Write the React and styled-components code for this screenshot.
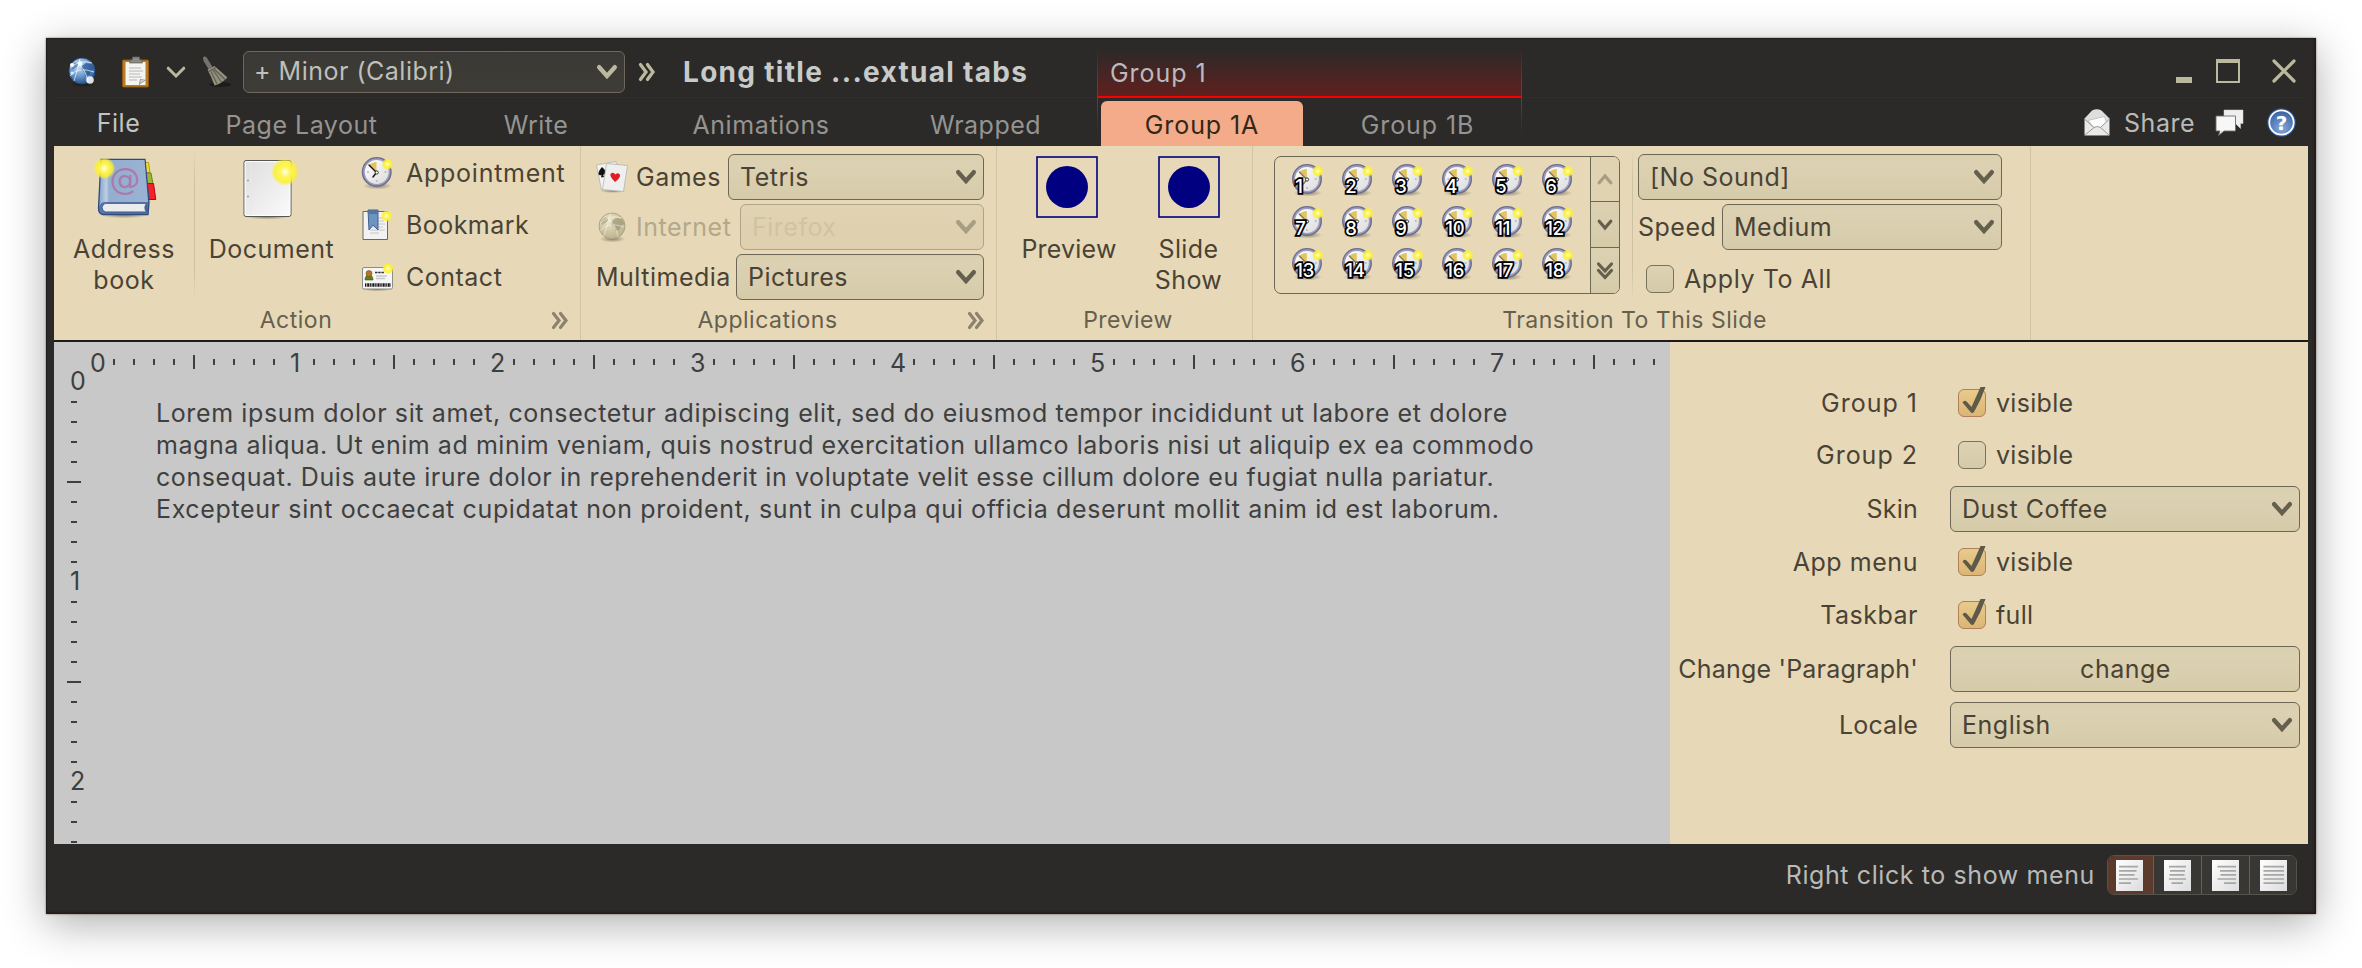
import React from 'react';
import styled, { createGlobalStyle, css } from 'styled-components';

const c = {
  frame: '#2b2a28',
  cream: '#e7d9b7',
  paper: '#c8c8c8',
  ink: '#4a4335',
  muted: '#665f4e',
  line: '#6d6856',
  olive: '#bbb99d',
};

const Global = createGlobalStyle`
  * { box-sizing: border-box; }
  html, body { margin: 0; background: #fff; }
  body { font-family: Inter, "Liberation Sans", sans-serif; font-size: 25px; letter-spacing: 0.5px; line-height: 32px; color: ${c.ink}; white-space: nowrap; overflow: hidden; }
  svg { display: block; flex: none; overflow: visible; }
`;

const Desktop = styled.div`
  width: 2362px;
  height: 968px;
  padding: 38px 46px 54px;
  overflow: hidden;
`;

const Window = styled.main`
  display: flex;
  flex-direction: column;
  width: 2270px;
  height: 876px;
  padding: 0 8px;
  background: ${c.frame};
  box-shadow: inset 0 0 0 1px #211d1a, inset 0 -2px 2px #2a1c16, inset -2px 0 2px #2a1c16, 0 0 2px rgba(0, 0, 0, 0.5), 0 10px 40px rgba(0, 0, 0, 0.32);
`;

const TitleBar = styled.header`
  display: flex;
  height: 60px;
  border-bottom: 1px solid #302e2c;
`;

const QuickAccess = styled.div`
  display: flex;
  align-items: center;
  width: 1043px;
  padding: 9px 0 0 12px;
`;

const Gap = styled.span`
  flex: none;
  width: ${(p) => p.$w}px;
`;

const Title = styled.h1`
  margin: 0;
  padding-bottom: 1px;
  font-size: 28px;
  font-weight: 700;
  letter-spacing: 1.3px;
  color: #c8caca;
`;

const contextEdge = css`
  content: '';
  position: absolute;
  top: 0;
  width: 1px;
  height: 86px;
  background: linear-gradient(transparent, #4a4744 40%, #4a4744 60%, transparent);
`;

const ContextGroup = styled.div`
  position: relative;
  align-self: flex-end;
  width: 425px;
  height: 49px;
  margin-bottom: -1px;
  padding: 8px 13px 0;
  letter-spacing: 0.95px;
  color: #bcbaba;
  background: linear-gradient(${c.frame}, #60201f);
  border-bottom: 2px solid #f80000;
  &::before { ${contextEdge} left: 0; }
  &::after { ${contextEdge} right: 0; }
`;

const WindowButtons = styled.div`
  display: flex;
  align-items: center;
  margin-left: auto;
  padding: 6px 12px 0 0;
`;

const TabBar = styled.nav`
  display: flex;
  height: 48px;
`;

const Tab = styled.span`
  width: ${(p) => p.$w}px;
  padding-top: ${(p) => (p.$lead ? 9 : 11)}px;
  text-align: center;
  letter-spacing: ${(p) => p.$ls ?? 0.5}px;
  color: ${(p) => (p.$active ? '#332718' : p.$lead ? '#c3c4c2' : '#949492')};
  ${(p) => p.$active && css`
    margin-top: 3px;
    padding-top: 8px;
    background: #f3ab89;
    border-radius: 6px 6px 0 0;
  `}
`;

const TabActions = styled.div`
  display: flex;
  align-items: center;
  margin-left: auto;
  padding: 1px 12px 0 0;
  color: #b9bab8;
`;

const Ribbon = styled.section`
  display: flex;
  height: 196px;
  background: ${c.cream};
  border-bottom: 2px solid #1d1a18;
`;

const Group = styled.section`
  display: flex;
  flex-direction: column;
  width: ${(p) => p.$w}px;
  border-right: 1px solid #cfc5a3;
`;

const GroupBody = styled.div`
  display: flex;
  height: 154px;
  padding-left: ${(p) => p.$pl || 0}px;
`;

const GroupLabel = styled.footer`
  display: flex;
  align-items: center;
  height: 40px;
  padding: 0 ${(p) => p.$pr || 0}px 0 ${(p) => p.$pl || 0}px;
  font-size: 23px;
  color: ${c.muted};
`;

const LabelText = styled.span`
  flex: 1;
  text-align: center;
`;

const Launcher = styled.span`
  width: 42px;
  padding-left: 14px;
`;

const BigButton = styled.div`
  display: flex;
  flex-direction: column;
  align-items: center;
  gap: 14px;
  width: ${(p) => p.$w}px;
  padding-top: 10px;
  text-align: center;
  white-space: pre-line;
  line-height: 31px;
  letter-spacing: ${(p) => p.$ls ?? 0.6}px;
`;

const IconSlot = styled.span`
  display: flex;
  justify-content: center;
  height: 64px;
  margin-left: ${(p) => p.$shift || 0}px;
`;

const Divider = styled.i`
  flex: none;
  width: 1px;
  height: 150px;
  margin-top: 4px;
  background: linear-gradient(transparent, #cdc3a0 20%, #cdc3a0 80%, transparent);
`;

const SmallList = styled.div`
  padding: 1px 0 0 13px;
`;

const SmallItem = styled.div`
  display: flex;
  align-items: center;
  gap: 13px;
  height: 52px;
  letter-spacing: ${(p) => p.$ls ?? 0.5}px;
`;

const FieldColumn = styled.div`
  display: flex;
  flex-direction: column;
  gap: 4px;
  width: ${(p) => p.$w}px;
  padding-top: 8px;
`;

const FieldRow = styled.div`
  display: flex;
  align-items: center;
  height: 46px;
  padding-top: ${(p) => p.$drop || 0}px;
  color: ${(p) => (p.$disabled ? '#b3a88c' : c.ink)};
`;

const ComboBox = styled.div`
  display: flex;
  align-items: center;
  justify-content: ${(p) => (p.$center ? 'center' : 'space-between')};
  width: ${(p) => p.$w}px;
  height: ${(p) => (p.$dark ? 42 : 46)}px;
  margin-left: auto;
  padding: 0 7px 0 ${(p) => (p.$center ? 8 : p.$dark ? 10 : 11)}px;
  border: 1px solid ${(p) => (p.$dark ? '#6f675b' : p.$disabled ? '#aea489' : c.line)};
  border-radius: 6px;
  background: ${(p) => (p.$dark ? 'linear-gradient(#3a3935, #3e3c36)' : p.$disabled ? 'linear-gradient(#e1d4b3, #decfae)' : 'linear-gradient(#d9ceac, #dcd1b2 15%, #d6cba9)')};
  color: ${(p) => (p.$dark ? '#bfbfbb' : p.$disabled ? '#cfc4a2' : c.ink)};
`;

const ComboText = styled.span`
  padding-bottom: ${(p) => (p.$dark ? 2 : 0)}px;
`;

const Box = styled.span`
  flex: none;
  width: 28px;
  height: 28px;
  border: 1px solid ${(p) => (p.$on ? '#b0805a' : '#77715e')};
  border-radius: 6px;
  background: ${(p) => (p.$on ? 'linear-gradient(#e8cb8c, #dcb574)' : 'linear-gradient(#ddd2b3, #d5caa8)')};
`;

const CheckRow = styled.div`
  display: flex;
  align-items: center;
  gap: 10px;
  height: 36px;
  padding: 0 0 0 8px;
  letter-spacing: ${(p) => p.$ls ?? 0.5}px;
`;

const Gallery = styled.div`
  display: flex;
  width: 346px;
  height: 138px;
  margin: 10px 12px 0 0;
  border: 1px solid ${c.line};
  border-radius: 7px;
  overflow: hidden;
`;

const GalleryGrid = styled.div`
  display: grid;
  grid-template-columns: repeat(6, 50px);
  grid-auto-rows: 42px;
  align-content: start;
  width: 315px;
  padding: 1px 0 0 7px;
`;

const GalleryCell = styled.div`
  display: grid;
  place-items: center;
`;

const GalleryScroll = styled.div`
  display: grid;
  grid-template-rows: 45px 46px 1fr;
  width: 29px;
  border-left: 1px solid ${c.line};
  background: #d9ceac;
`;

const ScrollButton = styled.span`
  display: grid;
  place-items: center;
  border-bottom: ${(p) => (p.$last ? '0' : `1px solid ${c.line}`)};
  background: ${(p) => (p.$disabled ? '#dfd3b1' : 'linear-gradient(#dcd1b2, #d6cba9)')};
`;

const Workspace = styled.div`
  display: flex;
  height: 502px;
`;

const Editor = styled.article`
  width: 1616px;
  background: ${c.paper};
  color: #3f3f3f;
  overflow: hidden;
`;

const HRuler = styled.div`
  display: flex;
  height: 30px;
  padding: 10px 0 0 30px;
`;

const HMark = styled.span`
  display: flex;
  align-items: center;
  flex: none;
  width: 20px;
  height: 20px;
  padding: ${(p) => (p.$n ? '2px 0 0 6px' : '0 0 0 9px')};
  line-height: 20px;
  &::before {
    content: '';
    width: ${(p) => (p.$n ? 0 : 2)}px;
    height: ${(p) => (p.$mid ? 14 : 6)}px;
    background: #3f3f3f;
  }
`;

const EditorBody = styled.div`
  display: flex;
`;

const VRuler = styled.div`
  width: 102px;
  height: 472px;
  padding-left: 13px;
`;

const VMark = styled.span`
  display: flex;
  align-items: center;
  height: 20px;
  padding: 0 0 ${(p) => (p.$n ? 2 : 0)}px ${(p) => (p.$mid ? 0 : p.$n ? 3 : 4)}px;
  line-height: 18px;
  &::before {
    content: '';
    width: ${(p) => (p.$n ? 0 : p.$mid ? 14 : 6)}px;
    height: 2px;
    background: #3f3f3f;
  }
`;

const Prose = styled.div`
  padding-top: 25px;
`;

const ProseLine = styled.div`
  letter-spacing: ${(p) => p.$ls}px;
`;

const SidePanel = styled.aside`
  width: 638px;
  padding: 34px 8px 0 0;
  background: ${c.cream};
`;

const SettingRow = styled.div`
  display: grid;
  grid-template-columns: 248px 350px;
  column-gap: 32px;
  align-items: center;
  height: ${(p) => p.$h}px;
`;

const SettingLabel = styled.span`
  text-align: right;
  letter-spacing: ${(p) => p.$ls}px;
`;

const StatusBar = styled.footer`
  display: flex;
  align-items: center;
  justify-content: flex-end;
  height: 62px;
  padding-right: 11px;
  letter-spacing: 0.6px;
  color: #b8bab9;
`;

const AlignButtons = styled.div`
  display: flex;
  width: 190px;
  height: 40px;
  margin-left: 12px;
  border: 1px solid #55514b;
  border-radius: 7px;
  overflow: hidden;
`;

const AlignButton = styled.span`
  display: grid;
  place-items: center;
  width: ${(p) => (p.$on || p.$last ? 46 : 48)}px;
  padding-right: ${(p) => (p.$on ? 2 : 0)}px;
  background: ${(p) => (p.$on ? '#5c3a2c' : '#383733')};
  border-right: ${(p) => (p.$last ? '0' : '1px solid #64605a')};
`;

const Defs = () => (
  <svg width="0" height="0" aria-hidden="true" style={{ position: 'absolute' }}>
    <defs>
      <radialGradient id="star">
        <stop offset="0" stopColor="#fffff0" />
        <stop offset="0.35" stopColor="#fff65a" />
        <stop offset="0.75" stopColor="#fdf12e" stopOpacity="0.85" />
        <stop offset="1" stopColor="#fdf12e" stopOpacity="0" />
      </radialGradient>
      <radialGradient id="shade">
        <stop offset="0" stopColor="#000" stopOpacity="0.4" />
        <stop offset="1" stopColor="#000" stopOpacity="0" />
      </radialGradient>
      <linearGradient id="sheet" x1="0" y1="0" x2="1" y2="1">
        <stop offset="0" stopColor="#fff" />
        <stop offset="1" stopColor="#dcdcdc" />
      </linearGradient>
      <linearGradient id="page" x1="0" y1="0" x2="1" y2="1">
        <stop offset="0" stopColor="#dedede" />
        <stop offset="1" stopColor="#fafafa" />
      </linearGradient>
      <radialGradient id="sea" cx="0.4" cy="0.3" r="0.75">
        <stop offset="0" stopColor="#cfe2f5" />
        <stop offset="0.5" stopColor="#6f9fd2" />
        <stop offset="1" stopColor="#1c4a86" />
      </radialGradient>
      <radialGradient id="sand" cx="0.4" cy="0.3" r="0.75">
        <stop offset="0" stopColor="#ece5c8" />
        <stop offset="1" stopColor="#b8ae88" />
      </radialGradient>
      <radialGradient id="help" cx="0.5" cy="0.75" r="0.8">
        <stop offset="0" stopColor="#86a9d8" />
        <stop offset="1" stopColor="#2f5a9c" />
      </radialGradient>
      <linearGradient id="cover" x1="0" y1="0" x2="1" y2="0">
        <stop offset="0" stopColor="#8aa6cc" />
        <stop offset="0.14" stopColor="#bccfe4" />
        <stop offset="0.2" stopColor="#93aed0" />
        <stop offset="1" stopColor="#9ab3d4" />
      </linearGradient>
    </defs>
  </svg>
);

const Chevron = ({ color = '#655f4e', w = 20, h = 14, sw = 4.4, up }) => (
  <svg width={w} height={h} viewBox={`0 0 ${w} ${h}`} transform={up ? 'rotate(180)' : undefined}>
    <path d={`M2.2 2.2L${w / 2} ${h - 3}L${w - 2.2} 2.2`} fill="none" stroke={color} strokeWidth={sw} strokeLinecap="round" />
  </svg>
);

const DoubleRight = ({ color = '#8b836d', h = 17 }) => (
  <svg width="16" height={h} viewBox="0 0 16 17" preserveAspectRatio="none">
    <path d="M1.5 1.5L7 8.5L1.5 15.5M8.5 1.5L14 8.5L8.5 15.5" fill="none" stroke={color} strokeWidth="3.2" strokeLinecap="round" />
  </svg>
);

const DoubleDown = () => (
  <svg width="16" height="17" viewBox="0 0 16 17">
    <path d="M1.5 2L8 9L14.5 2M1.5 8.5L8 15.5L14.5 8.5" fill="none" stroke="#655f4e" strokeWidth="3.2" strokeLinecap="round" />
  </svg>
);

const Star = ({ x, y, r }) => <circle cx={x} cy={y} r={r} fill="url(#star)" />;

const Globe = ({ muted }) => (
  <svg width="32" height="32" viewBox="0 0 32 32">
    <ellipse cx="16.5" cy="28" rx="13" ry="3.5" fill="url(#shade)" />
    <circle cx="16" cy="15" r="13" fill={muted ? 'url(#sand)' : 'url(#sea)'} stroke={muted ? '#a39b78' : '#234b80'} strokeWidth="0.8" />
    <path d="M16 10l4-3 6 1 2.500 5-3 1-2 5-4 1-1-4-3-2z" fill={muted ? '#9b9474' : '#1f4f90'} opacity="0.7" />
    <path d="M5 10l5-4 3 1-2 4-5 3z" fill={muted ? '#a59d7c' : '#3c70b2'} opacity="0.6" />
    <path d="M4 12Q14 3 26 7M4 20Q12 10 28 16M8 25Q12 12 14 2.500M22 26Q20 12 9 5" fill="none" stroke="#fff" strokeWidth="0.9" opacity={muted ? 0.5 : 0.75} />
    {!muted && <g fill="#fff"><circle cx="6" cy="9" r="2" /><circle cx="14" cy="7.5" r="2.2" opacity="0.9" /><circle cx="6" cy="17" r="1.6" opacity="0.8" /><circle cx="24" cy="24" r="3.8" opacity="0.85" /></g>}
  </svg>
);

const Clipboard = () => (
  <svg width="32" height="32" viewBox="0 0 32 32">
    <rect x="2.5" y="4" width="26" height="27" rx="1" fill="#b97c1e" stroke="#8a5810" />
    <path d="M5.5 6h20v23h-20z" fill="#f4f4f3" />
    <path d="M9 12h12M9 15h14M9 18h11M9 21h13M9 24h8" stroke="#b5b5b3" strokeWidth="1.2" />
    <path d="M19 29l1-6 6 1z" fill="#7d7d7b" /><path d="M20 28l0.5-4.5 4.5 0.5z" fill="#cfcfcd" />
    <path d="M9.5 7q0-3.5 3-3.5v-2.5h7v2.5q3 0 3 3.5z" fill="#8b8b85" stroke="#5d5d58" strokeWidth="0.7" />
  </svg>
);

const Broom = () => (
  <svg width="32" height="32" viewBox="0 0 32 32">
    <ellipse cx="21" cy="28.5" rx="11" ry="2.5" fill="#1c1b1a" />
    <path d="M4 1.5Q6-0.500 8 2L13.5 11L9.5 13L4.5 5Z" fill="#76736a" />
    <path d="M8.5 13.5L15.5 10L28.5 21.5Q22 28 15.5 29.5Q12 20 8.5 13.5Z" fill="#93907f" />
    <path d="M9 16L17 11.5M12 15.5L18 28M14 14L22.5 26M15.5 13.5L26 23.5" stroke="#5e5b50" strokeWidth="1.1" fill="none" />
  </svg>
);

const Envelope = () => (
  <svg width="26" height="27" viewBox="0 0 26 27">
    <path d="M0.5 9.5L8 1.5Q13-1 17.5 1.5L25.5 9.5V26.5H0.5Z" fill="#dedede" />
    <path d="M4 11.5L20.5 7.5L22.5 14L16 19H10Z" fill="#fdfdfd" stroke="#b5b5b5" strokeWidth="0.7" />
    <path d="M1 10.5L10 18.5Q13 16.5 16.5 18.5L25 10.5V26H1Z" fill="#e9e9e9" />
    <path d="M1 10.5L10 18.5Q13 16.5 16.5 18.5L25 10.5M1 26L10 18.5M25 26L16.5 18.5" fill="none" stroke="#999" strokeWidth="1" />
  </svg>
);

const Bubbles = () => (
  <svg width="28" height="28" viewBox="0 0 28 28">
    <path d="M8 1H27V14.5H24.5V19.5L20 15H8Z" fill="#efefef" stroke="#d0d0d0" strokeWidth="0.5" />
    <path d="M0 7H19.5V22H8L2.5 26.5L4 22H0Z" fill="#f7f7f7" stroke="#6d6d6b" strokeWidth="0.9" />
  </svg>
);

const Help = () => (
  <svg width="29" height="29" viewBox="0 0 29 29">
    <circle cx="14.5" cy="14.5" r="14.3" fill="#2a5596" />
    <circle cx="14.5" cy="14.5" r="12.2" fill="url(#help)" stroke="#fff" strokeWidth="1.8" />
    <text x="14.5" y="22" textAnchor="middle" fontFamily="DejaVu Sans" fontWeight="700" fontSize="20" letterSpacing="0" fill="#fff">?</text>
  </svg>
);

const AddressBook = () => (
  <svg width="64" height="64" viewBox="0 0 64 64">
    <ellipse cx="32" cy="59" rx="24" ry="3.5" fill="url(#shade)" />
    <path d="M52 6.5h4.5l1.5 10h-5z" fill="#f6dc2c" stroke="#b89a10" />
    <path d="M53 17h6l2 11h-7z" fill="#9db637" stroke="#6b8418" />
    <path d="M54 27.5h7.5l2.3 16h-8z" fill="#f0222c" stroke="#c30012" />
    <path d="M9 3.5H53L57 46.5L56 58.5H11Q6.5 58 6.5 52Z" fill="#5b78ad" stroke="#2f4a80" strokeWidth="1.3" />
    <path d="M9.5 4H52.5L56 46H13Q9 46 7.5 50Z" fill="url(#cover)" />
    <path d="M13.5 47.3H55Q51 51 54.5 56H13.5Q10 55 10 51.5Q10.5 48 13.5 47.3Z" fill="#ececec" stroke="#3c5486" strokeWidth="1" />
    <path d="M55 47.5Q51 51 54.5 56l1.5 0.5z" fill="#4a6296" />
    <text x="33" y="33.5" textAnchor="middle" fontFamily="DejaVu Sans" fontSize="31" letterSpacing="0" fill="#b2699f" opacity="0.75">@</text>
    <Star x="12.3" y="12.3" r="11" />
  </svg>
);

const DocumentIcon = () => (
  <svg width="64" height="64" viewBox="0 0 64 64">
    <ellipse cx="28" cy="61" rx="22" ry="2.5" fill="url(#shade)" />
    <rect x="5" y="4.5" width="47" height="56" rx="2" fill="url(#page)" stroke="#555955" />
    <rect x="6.2" y="5.7" width="44.6" height="53.6" rx="1" fill="none" stroke="#fff" />
    <circle cx="9" cy="24.5" r="0.9" fill="#999" /><circle cx="9" cy="40.5" r="0.9" fill="#999" />
    <path d="M12 6v53" stroke="#e8e8e8" />
    <Star x="46" y="16" r="14" />
  </svg>
);

const Clock = ({ label }) => (
  <svg width={label ? 30 : 32} height={label ? 30 : 32} viewBox={label ? '0.7 0 30 30' : '0 0 32 32'}>
    <ellipse cx="16.5" cy="29" rx="14.5" ry="3.5" fill="url(#shade)" />
    <circle cx="15.7" cy="15" r="15" fill="#6d6c90" />
    <circle cx="15.7" cy="14.8" r="13.6" fill="#9a9cba" />
    <circle cx="15.7" cy="15" r="11.9" fill="url(#sheet)" />
    <path d="M15.5 15.5L7.5 8.5Q10.5 5 15.5 5Z" fill="#e2c463" />
    <path d="M15.5 15.5L8 8M15.5 15.5L12 20" stroke={label ? '#8a7c48' : '#111'} strokeWidth="1.4" strokeLinecap="round" />
    <circle cx="15.7" cy="15.5" r="1.6" fill="#fff" stroke="#222" strokeWidth="0.9" />
    <g fill="#bbb"><circle cx="7" cy="15" r="1.1" /><circle cx="24.5" cy="15" r="1.1" /><circle cx="15.7" cy="24" r="1.1" /></g>
    <Star x="26.5" y="7.2" r="5.8" />
    {label && <text x="4" y="28.5" fontSize="18.5" fontWeight="500" letterSpacing="-0.2" fill="#fff" stroke="#000" strokeWidth="3.6" paintOrder="stroke" strokeLinejoin="miter">{label}</text>}
  </svg>
);

const BookmarkIcon = () => (
  <svg width="32" height="32" viewBox="0 0 32 32">
    <path d="M2 2.5H26.5V30.5H2Z" fill="#f2f2f2" stroke="#666a66" />
    <path d="M9 9h15M9 12h14M9 15h15M9 18h13M9 21h15M9 24h9" stroke="#c6c6c6" />
    <path d="M7 1H17V21L12 16L8 21Z" fill="#6d93c0" stroke="#3e618f" />
    <path d="M7 1h10v4H7z" fill="#54759f" />
    <Star x="25.5" y="7" r="5.8" />
  </svg>
);

const ContactIcon = () => (
  <svg width="32" height="32" viewBox="0 0 32 32">
    <ellipse cx="16" cy="28.5" rx="15" ry="1.8" fill="url(#shade)" />
    <rect x="1.5" y="6.5" width="30" height="21.5" rx="1.5" fill="#f6f6f6" stroke="#8c8c88" />
    <path d="M4 19q0-5 4-5t4 5z" fill="#5d7f1c" stroke="#3c5a08" strokeWidth="0.6" />
    <circle cx="8" cy="12.5" r="3" fill="#b5762a" stroke="#7d4b10" strokeWidth="0.6" />
    <path d="M14 11.5h9" stroke="#333" strokeWidth="1.6" strokeDasharray="2.5 0.7" />
    <path d="M15 15h11M15 17.5h9" stroke="#c8c8c8" strokeWidth="1.3" />
    <path d="M4 24h26" stroke="#1a1a1a" strokeWidth="3.6" strokeDasharray="1.4 0.8 2.2 0.7" />
    <Star x="27" y="7.5" r="5.8" />
  </svg>
);

const Cards = () => (
  <svg width="32" height="32" viewBox="0 0 32 32">
    <ellipse cx="17" cy="30" rx="13" ry="2" fill="url(#shade)" />
    <path d="M0.5 4L20 0.5L22 23L5.5 29Z" fill="#f3f3f3" stroke="#b2b2ae" strokeWidth="0.8" />
    <path d="M6 6q4 3.500 4 6t-3 1.500l1 2.500-3 0.500 0.500-2.500q-3.500 1-3-2t3.500-6z" fill="#111" />
    <path d="M10.5 2.5L31.5 4.5L27.5 30.5L6.5 28.5Z" fill="#efefef" stroke="#b2b2ae" strokeWidth="0.8" />
    <path d="M19 21Q13.5 15.5 14.5 13Q17 10.5 19.5 13.5Q22.5 11 24 14Q24.5 17 19 21Z" fill="#dc1f26" />
  </svg>
);

const NavyDisc = () => (
  <svg width="62" height="62" viewBox="0 0 62 62">
    <rect x="1" y="1" width="60" height="60" fill="none" stroke="#000080" strokeWidth="1.6" />
    <circle cx="31" cy="31" r="21" fill="#000080" />
  </svg>
);

const alignLines = {
  left: [[3, 22], [3, 20.5], [3, 18.5], [3, 22], [3, 15]],
  center: [[5, 22], [6, 21], [5.5, 20.5], [5, 22], [7.5, 19]],
  right: [[5.5, 24], [8, 24], [8.5, 24], [5.5, 24], [12, 24]],
  justify: [[3.5, 24], [3.5, 24], [3.5, 24], [3.5, 24], [3.5, 24]],
};

const AlignIcon = ({ kind }) => (
  <svg width="27" height="31" viewBox="0 0 27 31">
    <rect width="27" height="31" fill="url(#sheet)" />
    {alignLines[kind].map(([a, b], i) => (
      <path key={i} d={`M${a} ${6.7 + i * 4.1}H${b}`} stroke="#a6a6a4" strokeWidth="1.7" />
    ))}
  </svg>
);

const Minimize = () => <svg width="16" height="24"><rect y="18" width="16" height="6" fill={c.olive} /></svg>;
const Maximize = () => <svg width="24" height="24"><path d="M0 0H24V24H0ZM2 4V22H22V4Z" fillRule="evenodd" fill={c.olive} /></svg>;
const Close = () => (
  <svg width="24" height="24"><path d="M2 2L22 22M22 2L2 22" stroke={c.olive} strokeWidth="3.2" strokeLinecap="round" /></svg>
);

const Checkbox = ({ on }) => (
  <Box $on={on}>
    {on && <svg width="26" height="26" viewBox="0 0 26 26"><path d="M3.5 12.5Q5.5 9.5 8 12L12.5 17L21.5 -3H26.5Q22 10 15 22Q13 24 11.5 22Z" fill="#5f594a" /></svg>}
  </Box>
);

const Combo = ({ children, w, dark, disabled }) => (
  <ComboBox $w={w} $dark={dark} $disabled={disabled}>
    <ComboText $dark={dark}>{children}</ComboText>
    <Chevron color={dark ? c.olive : disabled ? '#a79e84' : undefined} />
  </ComboBox>
);

const prose = [
  { ls: 0.62, text: 'Lorem ipsum dolor sit amet, consectetur adipiscing elit, sed do eiusmod tempor incididunt ut labore et dolore' },
  { ls: 0.55, text: 'magna aliqua. Ut enim ad minim veniam, quis nostrud exercitation ullamco laboris nisi ut aliquip ex ea commodo' },
  { ls: 0.59, text: 'consequat. Duis aute irure dolor in reprehenderit in voluptate velit esse cillum dolore eu fugiat nulla pariatur.' },
  { ls: 0.63, text: 'Excepteur sint occaecat cupidatat non proident, sunt in culpa qui officia deserunt mollit anim id est laborum.' },
];

const marks = (Mark, count) =>
  Array.from({ length: count }, (_, i) => (
    <Mark key={i} $n={i % 10 === 0} $mid={i % 10 === 5}>{i % 10 === 0 ? i / 10 : null}</Mark>
  ));

const settings = [
  { label: 'Group 1', ls: 1, h: 53, check: true, text: 'visible' },
  { label: 'Group 2', ls: 1, h: 52, check: false, text: 'visible' },
  { label: 'Skin', ls: 0.2, h: 56, combo: 'Dust Coffee' },
  { label: 'App menu', ls: 0.55, h: 50, check: true, text: 'visible' },
  { label: 'Taskbar', ls: 0.5, h: 55, check: true, text: 'full' },
  { label: "Change 'Paragraph'", ls: 0.2, h: 54, button: 'change' },
  { label: 'Locale', ls: 0.1, h: 58, combo: 'English' },
];

export default function App() {
  return (
    <Desktop>
      <Global />
      <Defs />
      <Window>
        <TitleBar>
          <QuickAccess>
            <Globe /><Gap $w={22} />
            <Clipboard /><Gap $w={14} />
            <Chevron color={c.olive} h={13} sw={3} /><Gap $w={13} />
            <Broom /><Gap $w={12} />
            <div><Combo w={382} dark>+ Minor (Calibri)</Combo></div><Gap $w={14} />
            <DoubleRight color={c.olive} h={18} /><Gap $w={28} />
            <Title>Long title ...extual tabs</Title>
          </QuickAccess>
          <ContextGroup>Group 1</ContextGroup>
          <WindowButtons>
            <Minimize /><Gap $w={24} /><Maximize /><Gap $w={32} /><Close />
          </WindowButtons>
        </TitleBar>
        <TabBar>
          <Tab $w={129} $lead>File</Tab>
          <Tab $w={237}>Page Layout</Tab>
          <Tab $w={232}>Write</Tab>
          <Tab $w={218} $ls={0.6}>Animations</Tab>
          <Tab $w={231}>Wrapped</Tab>
          <Tab $w={202} $active $ls={0.9}>Group 1A</Tab>
          <Tab $w={229} $ls={0.9}>Group 1B</Tab>
          <TabActions>
            <Envelope /><Gap $w={14} />Share<Gap $w={21} /><Bubbles /><Gap $w={23} /><Help />
          </TabActions>
        </TabBar>
        <Ribbon>
          <Group $w={527}>
            <GroupBody>
              <BigButton $w={140}><IconSlot><AddressBook /></IconSlot>{'Address\nbook'}</BigButton>
              <Divider />
              <BigButton $w={153} $ls={0.5}><IconSlot $shift={-2}><DocumentIcon /></IconSlot>Document</BigButton>
              <SmallList>
                <SmallItem $ls={0.75}><Clock />Appointment</SmallItem>
                <SmallItem $ls={0.45}><BookmarkIcon />Bookmark</SmallItem>
                <SmallItem><ContactIcon />Contact</SmallItem>
              </SmallList>
            </GroupBody>
            <GroupLabel><LabelText>Action</LabelText><Launcher><DoubleRight /></Launcher></GroupLabel>
          </Group>
          <Group $w={416}>
            <GroupBody $pl={15}>
              <FieldColumn $w={388}>
                <FieldRow><Cards /><Gap $w={8} />Games<Combo w={256}>Tetris</Combo></FieldRow>
                <FieldRow $disabled><Globe muted /><Gap $w={8} />Internet<Combo w={244} disabled>Firefox</Combo></FieldRow>
                <FieldRow>Multimedia<Combo w={248}>Pictures</Combo></FieldRow>
              </FieldColumn>
            </GroupBody>
            <GroupLabel><LabelText>Applications</LabelText><Launcher><DoubleRight /></Launcher></GroupLabel>
          </Group>
          <Group $w={256}>
            <GroupBody $pl={12}>
              <BigButton $w={120} $ls={0.2}><IconSlot $shift={-4}><NavyDisc /></IconSlot>Preview</BigButton>
              <BigButton $w={119} $ls={0.4}><IconSlot><NavyDisc /></IconSlot>{'Slide\nShow'}</BigButton>
            </GroupBody>
            <GroupLabel $pl={7}><LabelText>Preview</LabelText></GroupLabel>
          </Group>
          <Group $w={778}>
            <GroupBody $pl={21}>
              <Gallery>
                <GalleryGrid>
                  {Array.from({ length: 18 }, (_, i) => <GalleryCell key={i}><Clock label={String(i + 1)} /></GalleryCell>)}
                </GalleryGrid>
                <GalleryScroll>
                  <ScrollButton $disabled><Chevron up w={16} h={12} sw={3.2} color="#a69d82" /></ScrollButton>
                  <ScrollButton><Chevron w={16} h={12} sw={3.2} /></ScrollButton>
                  <ScrollButton $last><DoubleDown /></ScrollButton>
                </GalleryScroll>
              </Gallery>
              <Divider />
              <Gap $w={5} />
              <FieldColumn $w={364}>
                <FieldRow><Combo w={364}>[No Sound]</Combo></FieldRow>
                <FieldRow>Speed<Combo w={280}>Medium</Combo></FieldRow>
                <FieldRow $drop={3}><CheckRow $ls={0.6}><Checkbox />Apply To All</CheckRow></FieldRow>
              </FieldColumn>
            </GroupBody>
            <GroupLabel $pr={14}><LabelText>Transition To This Slide</LabelText></GroupLabel>
          </Group>
        </Ribbon>
        <Workspace>
          <Editor>
            <HRuler>{marks(HMark, 79)}</HRuler>
            <EditorBody>
              <VRuler>{marks(VMark, 24)}</VRuler>
              <Prose>
                {prose.map((line) => <ProseLine key={line.text} $ls={line.ls}>{line.text}</ProseLine>)}
              </Prose>
            </EditorBody>
          </Editor>
          <SidePanel>
            {settings.map((s) => (
              <SettingRow key={s.label} $h={s.h}>
                <SettingLabel $ls={s.ls}>{s.label}</SettingLabel>
                {s.combo && <Combo w={350}>{s.combo}</Combo>}
                {s.button && <ComboBox $w={350} $center>{s.button}</ComboBox>}
                {s.text && <CheckRow $ls={0.3}><Checkbox on={s.check} />{s.text}</CheckRow>}
              </SettingRow>
            ))}
          </SidePanel>
        </Workspace>
        <StatusBar>
          Right click to show menu
          <AlignButtons>
            <AlignButton $on><AlignIcon kind="left" /></AlignButton>
            <AlignButton><AlignIcon kind="center" /></AlignButton>
            <AlignButton><AlignIcon kind="right" /></AlignButton>
            <AlignButton $last><AlignIcon kind="justify" /></AlignButton>
          </AlignButtons>
        </StatusBar>
      </Window>
    </Desktop>
  );
}
